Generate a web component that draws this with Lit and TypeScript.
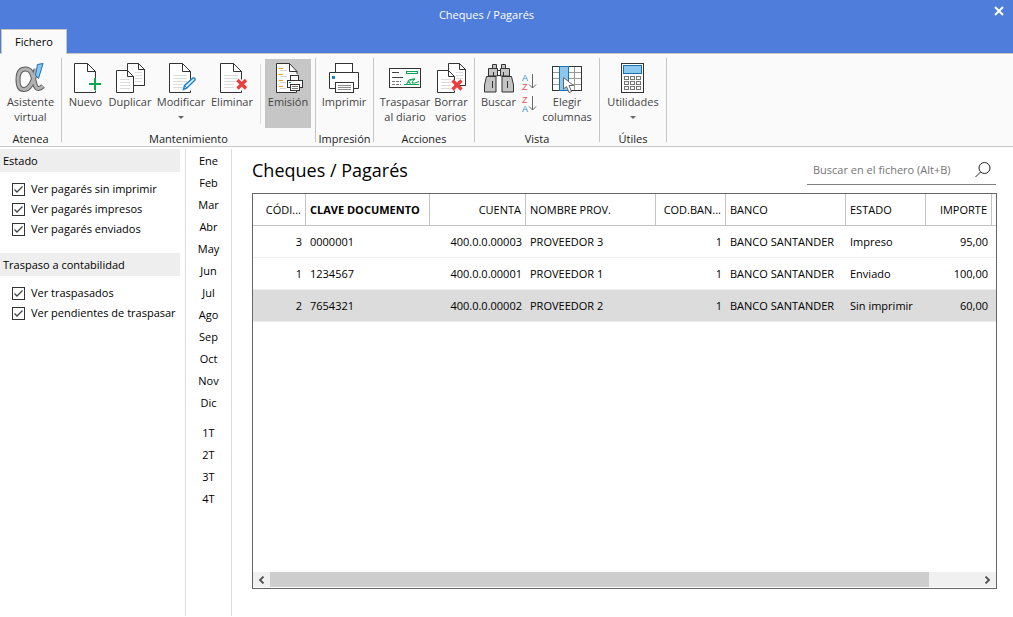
import { LitElement, html, svg, css, nothing } from "lit";
import type { TemplateResult } from "lit";
import { customElement, property, state } from "lit/decorators.js";
import { classMap } from "lit/directives/class-map.js";

/* ---------- icon pieces ---------- */

const sheet = (x: number, y: number, w: number, h: number, fold: number, cut = 0) => svg`
  <path d="M${x} ${y}H${x + w - fold}L${x + w} ${y + fold}V${y + h}H${x}Z" fill="#fff"/>
  <path d="M${x + w} ${y + h - cut}V${y + fold}L${x + w - fold} ${y}H${x}V${y + h}H${x + w}${cut ? "v-2" : "V" + (y + fold)}" fill="none" stroke="#333"/>
  <path d="M${x + w - fold} ${y}V${y + fold}H${x + w}" fill="none" stroke="#333"/>`;

const rules = (x: number, w: number, ys: number[]) =>
  svg`<path d="${ys.map((y) => `M${x} ${y}h${w}`).join("")}" stroke="#dcdcdc"/>`;

const cross = svg`<path d="M21.5 18l8.5 8.5M30 18l-8.5 8.5" stroke="#ee3b3b" stroke-width="3.2"/>`;

const icons: Record<string, TemplateResult> = {
  alpha: svg`
    <path d="M21 7C19 19 14.500 27.500 8.500 27.500C4 27.500 3 22 3 17.500C3 11 5.500 7 10.500 7C16.500 7 17.500 13 19.500 20.500C20.500 26 23 29 28 24" fill="none" stroke="#5c5c5c" stroke-width="5"/>
    <path d="M21 7C19 19 14.500 27.500 8.500 27.500C4 27.500 3 22 3 17.500C3 11 5.500 7 10.500 7C16.500 7 17.500 13 19.500 20.500C20.500 26 23 29 28 24" fill="none" stroke="#b2b2b2" stroke-width="3"/>
    <path d="M22.500 2.500L28 1.500L23.500 16.500L20.500 13Z" fill="#8cc7f0" stroke="#1a6fb5"/>`,
  nuevo: svg`${sheet(4.5, 1.5, 21, 29, 8, 13)}<path d="M25 16v12M19 22h12" stroke="#0ca750" stroke-width="2"/>`,
  duplicar: svg`${sheet(13.5, 1.5, 17, 22, 6)}${rules(21, 7, [10.5, 13.5, 16.5, 19.5])}
    ${sheet(2.5, 8.5, 17, 22, 6)}${rules(6, 10, [17.5, 20.5, 23.5, 26.5])}`,
  modificar: svg`${sheet(4.5, 1.5, 21, 29, 8, 13)}${rules(8, 14, [13.5, 16.5, 19.5])}${rules(8, 10, [22.5, 25.5])}
    <path d="M18.500 27.500L19.500 23.500L28 16Q30.500 15.500 30 18L22 26Z" fill="#d9edf9" stroke="#1d83c9" stroke-width="1.400"/>
    <path d="M19.500 23.500L22 26" stroke="#1d83c9"/>`,
  eliminar: svg`${sheet(4.5, 1.5, 21, 29, 8, 13)}${rules(8, 14, [13.5, 16.5, 19.5])}${rules(8, 10, [22.5, 25.5])}${cross}`,
  emision: svg`
    <path d="M4.500 1.500H18L25 9.500V30.500H4.500Z" fill="#fff"/>
    <path d="M25 12V9.500L17.500 1.500H4.500V30.500H24.500V28M17.500 1.500V9.500H25" fill="none" stroke="#333"/>
    <path d="M7 6.500h4M7 12.500h4M7 18.500h4M7 24.500h4" stroke="#f39c12"/>
    <path d="M8 8.500h7M8 14.500h7M8 20.500h6M8 26.500h6" stroke="#d4d4d4"/>
    <rect x="18.500" y="13.500" width="8" height="5" fill="#fff" stroke="#333"/>
    <rect x="15.500" y="18.500" width="15" height="7" fill="#fff" stroke="#333"/>
    <rect x="18.500" y="22.500" width="9" height="6" fill="#fff" stroke="#333"/>
    <path d="M20 24.500h6M20 26.500h6" stroke="#777"/>
    <path d="M17 20.500h2" stroke="#1d83c9"/>`,
  imprimir: svg`
    <rect x="7.500" y="1.500" width="17" height="10" fill="#fff" stroke="#333"/>
    <path d="M1.500 10.500H30.500V26.500H1.500Z" fill="#fff" stroke="#333"/>
    <rect x="4" y="14" width="3" height="3" fill="#1d83c9"/>
    <rect x="7.500" y="20.500" width="18" height="10" fill="#fff" stroke="#333"/>
    <path d="M10 23.500h13M10 25.500h13M10 27.500h13" stroke="#888"/>`,
  traspasar: svg`
    <rect x=".5" y="6.500" width="31" height="19" fill="#fff" stroke="#333"/>
    <path d="M3 10.500h7M3 15.500h11" stroke="#444"/>
    <path d="M3 19.500h9M3 22.500h9" stroke="#777" stroke-dasharray="3 1"/>
    <rect x="17.500" y="9.500" width="11" height="2" fill="#fff" stroke="#0ca750"/>
    <path d="M15 22.500h15M26 17q-8 0-7 3q4 1 1 2.500q-3 0-2-1.500q4-4 8-4q-3 2-3 4h3l4-1.500" fill="none" stroke="#0ca750"/>`,
  borrar: svg`${sheet(13.5, 1.5, 17, 22, 6)}${rules(21, 7, [10.5, 13.5, 16.5])}
    ${sheet(2.5, 8.5, 17, 22, 6, 12)}${rules(6, 10, [17.5, 20.5, 23.5, 26.5])}
    <path d="M17.500 18.500l9 9M26.500 18.500l-9 9" stroke="#ee3b3b" stroke-width="3.200"/>`,
  buscar: svg`
    <g fill="#c4c4c4" stroke="#333">
      <path d="M9.500 2.500h4v4h-4zM18.500 2.500h4v4h-4z"/>
      <rect x="14.500" y="8.500" width="3" height="5" fill="#fff"/>
      <path d="M5.500 6.500h9v7.500h-9zM17.500 6.500h9v7.500h-9z"/>
      <path d="M3.500 14.500h9.500v15.500h-11.500v-7zM19 14.500h9.500l2 8.500v7h-11.500z"/>
      <path d="M10.500 10v4M20.500 10v4M9.500 19v7M24.500 19v7" fill="none"/>
    </g>`,
  columnas: svg`
    <rect x="1.500" y="4.500" width="29" height="24" fill="#fff" stroke="#333"/>
    <path d="M2 10.500h28M2 16.500h28M2 22.500h28M17.500 5v23M23.500 5v23" stroke="#999"/>
    <rect x="8.500" y="4.500" width="9" height="24" fill="#8cc7f0" stroke="#1a6fb5"/>
    <path d="M12.500 15.500V27L15.500 24.500L18 30.500L20.500 29.500L18 23.500H22.500Z" fill="#fff" stroke="#666"/>`,
  calculadora: svg`
    <rect x="4.500" y="1.500" width="22" height="29" fill="#fff" stroke="#333"/>
    <rect x="6.500" y="3.500" width="18" height="8" fill="#8cc7f0" stroke="#1a6fb5"/>
    <g fill="#fff" stroke="#777">
      ${[14.5, 19.5, 24.5].map((y) => [7.5, 13.5, 19.5].map((x) => svg`<rect x=${x} y=${y} width="4" height="3"/>`))}
    </g>`,
};

const glyph = (name: string) => html`<svg class="icon" width="32" height="32" viewBox="0 0 32 32" aria-hidden="true">${icons[name]}</svg>`;

const sortGlyph = (top: string, bottom: string) => html`
  <svg width="16" height="20" viewBox="0 0 16 20" aria-hidden="true">
    <text x="1" y="9" class=${top === "A" ? "za a" : "za z"}>${top}</text>
    <text x="1" y="18" class=${bottom === "A" ? "za a" : "za z"}>${bottom}</text>
    <path d="M11.500 2V16M8 12.500L11.500 16L15 12.500" fill="none" stroke="#666"/>
  </svg>`;

/* ---------- ribbon ---------- */

@customElement("ribbon-button")
class RibbonButton extends LitElement {
  @property() label = "";
  @property() icon = "";
  @property({ type: Boolean }) menu = false;
  @property({ type: Boolean }) pressed = false;

  static styles = css`
    :host { display: block; flex: none; }
    .btn {
      display: flex; flex-direction: column; align-items: center; justify-content: flex-start;
      width: 100%; height: 69px; padding: 3px 0 0; margin: 0; border: 0;
      background: none; color: #444;
      font: 11px/15px "Open Sans", "Noto Sans", sans-serif;
    }
    .pressed { background: #c6c6c6; }
    .icon { display: block; flex: none; }
    .label { white-space: pre; text-align: center; }
    .arrow {
      margin-top: 7px;
      border: 3px solid transparent; border-top-color: #666; border-bottom: 0;
    }
  `;

  render() {
    return html`<button class=${classMap({ btn: true, pressed: this.pressed })} aria-pressed=${this.pressed}>
      ${glyph(this.icon)}
      <span class="label">${this.label}</span>
      ${this.menu ? html`<span class="arrow"></span>` : nothing}
    </button>`;
  }
}

@customElement("app-ribbon")
class AppRibbon extends LitElement {
  static styles = css`
    :host {
      display: flex; padding: 4px 0;
      border-bottom: 1px solid #c6c6c6; background: #fafafa;
      font: 11px/15px "Open Sans", "Noto Sans", sans-serif; color: #222;
    }
    .group {
      display: flex; flex-direction: column; justify-content: space-between;
      height: 84px; padding-top: 1px; box-sizing: border-box;
      border-right: 1px solid #c6c6c6;
    }
    .tools { display: flex; padding: 0 4px; }
    .tools.tight { padding-left: 3px; }
    .name { text-align: center; height: 11px; line-height: 15px; white-space: nowrap; }
    .rule { width: 1px; height: 60px; margin: 5px 4px 0; background: #ddd; }
    .sorts { display: flex; flex-direction: column; gap: 2px; padding: 13px 2px 0; }
    .sort { display: block; padding: 0; border: 0; background: none; height: 20px; }
    .sort svg { display: block; overflow: visible; }
    .za { font: 9px "Liberation Sans", sans-serif; }
    .a { fill: #2a8fd0; }
    .z { fill: #e05555; }
    .w38 { width: 38px; } .w41 { width: 41px; } .w46 { width: 46px; } .w48 { width: 48px; }
    .w50 { width: 50px; } .w53 { width: 53px; } .w54 { width: 54px; } .w56 { width: 56px; } .w58 { width: 58px; }
  `;

  render() {
    return html`
      <div class="group">
        <div class="tools"><ribbon-button class="w53" icon="alpha" label=${"Asistente\nvirtual"}></ribbon-button></div>
        <div class="name">Atenea</div>
      </div>
      <div class="group">
        <div class="tools tight">
          <ribbon-button class="w41" icon="nuevo" label="Nuevo"></ribbon-button>
          <ribbon-button class="w48" icon="duplicar" label="Duplicar"></ribbon-button>
          <ribbon-button class="w54" icon="modificar" label="Modificar" menu></ribbon-button>
          <ribbon-button class="w48" icon="eliminar" label="Eliminar"></ribbon-button>
          <span class="rule"></span>
          <ribbon-button class="w46" icon="emision" label="Emisión" pressed></ribbon-button>
        </div>
        <div class="name">Mantenimiento</div>
      </div>
      <div class="group">
        <div class="tools tight"><ribbon-button class="w50" icon="imprimir" label="Imprimir"></ribbon-button></div>
        <div class="name">Impresión</div>
      </div>
      <div class="group">
        <div class="tools">
          <ribbon-button class="w54" icon="traspasar" label=${"Traspasar\nal diario"}></ribbon-button>
          <ribbon-button class="w38" icon="borrar" label=${"Borrar\nvarios"}></ribbon-button>
        </div>
        <div class="name">Acciones</div>
      </div>
      <div class="group">
        <div class="tools tight">
          <ribbon-button class="w41" icon="buscar" label="Buscar"></ribbon-button>
          <div class="sorts">
            <button class="sort" aria-label="Orden ascendente">${sortGlyph("A", "Z")}</button>
            <button class="sort" aria-label="Orden descendente">${sortGlyph("Z", "A")}</button>
          </div>
          <ribbon-button class="w56" icon="columnas" label=${"Elegir\ncolumnas"}></ribbon-button>
        </div>
        <div class="name">Vista</div>
      </div>
      <div class="group">
        <div class="tools"><ribbon-button class="w58" icon="calculadora" label="Utilidades" menu></ribbon-button></div>
        <div class="name">Útiles</div>
      </div>`;
  }
}

/* ---------- filters ---------- */

@customElement("filter-panel")
class FilterPanel extends LitElement {
  static styles = css`
    :host { display: block; padding-right: 5px; font: 11px/20px "Open Sans", "Noto Sans", sans-serif; color: #000; }
    .section { margin: 0; padding: 0; border: 0; }
    .section + .section { margin-top: 14px; }
    .title { display: block; width: 100%; box-sizing: border-box; height: 23px; line-height: 23px; padding: 0 3px; background: #eee; margin-bottom: 7px; }
    .row { display: flex; align-items: center; gap: 6px; height: 20px; padding-left: 12px; white-space: nowrap; }
    .box {
      appearance: none; flex: none; width: 13px; height: 13px; margin: 0;
      border: 1px solid #333; background: #fff;
    }
    .tick { display: grid; flex: none; }
    .tick > * { grid-area: 1 / 1; }
    .tick svg { pointer-events: none; visibility: hidden; }
    .box:checked + svg { visibility: visible; }
  `;

  private groups = [
    { title: "Estado", items: ["Ver pagarés sin imprimir", "Ver pagarés impresos", "Ver pagarés enviados"] },
    { title: "Traspaso a contabilidad", items: ["Ver traspasados", "Ver pendientes de traspasar"] },
  ];

  render() {
    return this.groups.map((g) => html`
      <fieldset class="section">
        <legend class="title">${g.title}</legend>
        ${g.items.map((text) => html`
          <label class="row">
            <span class="tick">
              <input class="box" type="checkbox" checked />
              <svg width="13" height="13" viewBox="0 0 13 13" aria-hidden="true"><path d="M2.500 6.500L5 9L10.500 3.500" fill="none" stroke="#444" stroke-width="1.300"/></svg>
            </span>
            <span>${text}</span>
          </label>`)}
      </fieldset>`);
  }
}

@customElement("period-list")
class PeriodList extends LitElement {
  static styles = css`
    :host { display: block; border: solid #dcdcdc; border-width: 0 1px; padding-top: 1px; }
    .period {
      display: block; width: 100%; height: 22px; padding: 0; border: 0; background: none;
      font: 11px/22px "Open Sans", "Noto Sans", sans-serif; color: #000; text-align: center;
    }
    .quarters { margin-top: 8px; }
  `;

  render() {
    const months = ["Ene", "Feb", "Mar", "Abr", "May", "Jun", "Jul", "Ago", "Sep", "Oct", "Nov", "Dic"];
    const quarters = ["1T", "2T", "3T", "4T"];
    return html`
      <div>${months.map((m) => html`<button class="period">${m}</button>`)}</div>
      <div class="quarters">${quarters.map((q) => html`<button class="period">${q}</button>`)}</div>`;
  }
}

/* ---------- grid ---------- */

interface Column { title: string; width: number; right?: boolean; strong?: boolean; }

const columns: Column[] = [
  { title: "CÓDI...", width: 53, right: true },
  { title: "CLAVE DOCUMENTO", width: 124, strong: true },
  { title: "CUENTA", width: 96, right: true },
  { title: "NOMBRE PROV.", width: 130 },
  { title: "COD.BAN...", width: 70, right: true },
  { title: "BANCO", width: 120 },
  { title: "ESTADO", width: 80 },
  { title: "IMPORTE", width: 66, right: true },
];

const records = [
  ["3", "0000001", "400.0.0.00003", "PROVEEDOR 3", "1", "BANCO SANTANDER", "Impreso", "95,00"],
  ["1", "1234567", "400.0.0.00001", "PROVEEDOR 1", "1", "BANCO SANTANDER", "Enviado", "100,00"],
  ["2", "7654321", "400.0.0.00002", "PROVEEDOR 2", "1", "BANCO SANTANDER", "Sin imprimir", "60,00"],
];

@customElement("cheque-grid")
class ChequeGrid extends LitElement {
  @state() private selected = 2;

  static styles = css`
    :host { display: flex; flex-direction: column; border: 1px solid #666; background: #fff; overflow: hidden; }
    .view { flex: 1; overflow: hidden; }
    .table {
      width: 100%; table-layout: fixed; border-collapse: separate; border-spacing: 0;
      font: 11px/16px "Open Sans", "Noto Sans", sans-serif; color: #000;
    }
    .head, .cell {
      height: 32px; box-sizing: border-box; padding: 0 4px; text-align: left; font-weight: 400;
      white-space: nowrap; overflow: hidden; border-bottom: 1px solid #eee;
    }
    .head { border-bottom-color: #c4c4c4; border-right: 1px solid #c4c4c4; text-overflow: ellipsis; }
    .head:last-child { border-right: 0; padding: 0; }
    .cell:last-child { padding: 0; }
    .right { text-align: right; }
    .strong { font-weight: 700; }
    .chosen .cell { background: #dcdcdc; }
    .scroll { display: flex; height: 15px; margin-bottom: 1px; background: #f0f0f0; }
    .step { width: 17px; padding: 0; border: 0; background: none; display: flex; align-items: center; justify-content: center; }
    .track { flex: 1; }
    .thumb { height: 100%; background: #cdcdcd; }
  `;

  render() {
    return html`
      <div class="view">
        <table class="table">
          <colgroup>${columns.map((c) => html`<col style="width:${c.width}px" />`)}<col /></colgroup>
          <thead><tr>
            ${columns.map((c) => html`<th class=${classMap({ head: true, right: !!c.right, strong: !!c.strong })}>${c.title}</th>`)}
            <th class="head"></th>
          </tr></thead>
          <tbody>
            ${records.map((r, i) => html`
              <tr class=${classMap({ chosen: i === this.selected })} @click=${() => (this.selected = i)}>
                ${r.map((v, k) => html`<td class=${classMap({ cell: true, right: !!columns[k].right })}>${v}</td>`)}
                <td class="cell"></td>
              </tr>`)}
          </tbody>
        </table>
      </div>
      <div class="scroll">
        <button class="step" aria-label="Desplazar a la izquierda">
          <svg width="7" height="8" viewBox="0 0 7 8"><path d="M5.500 .5L2 4L5.500 7.500" fill="none" stroke="#505050" stroke-width="1.800"/></svg>
        </button>
        <div class="track"><div class="thumb" style="width:93%"></div></div>
        <button class="step" aria-label="Desplazar a la derecha">
          <svg width="7" height="8" viewBox="0 0 7 8"><path d="M1.500 .5L5 4L1.500 7.500" fill="none" stroke="#505050" stroke-width="1.800"/></svg>
        </button>
      </div>`;
  }
}

/* ---------- window ---------- */

@customElement("app-root")
class AppRoot extends LitElement {
  static styles = css`
    :host {
      display: flex; flex-direction: column; min-height: 100vh; background: #fff;
      font-family: "Open Sans", "Noto Sans", sans-serif; font-size: 11px; color: #000;
    }
    .titlebar {
      display: grid; grid-template-columns: 1fr 40px; align-items: center; height: 29px;
      background: #4e7ddb; color: #fff; text-align: center;
    }
    .caption { font-size: 11px; font-weight: 400; margin: 0; }
    .close {
      display: flex; align-items: center; justify-content: center; justify-self: end; align-self: start;
      width: 29px; height: 22px; padding: 0; border: 0; background: none;
    }
    .tabs { display: flex; height: 24px; background: #4e7ddb; padding-left: 1px; border-bottom: 1px solid #c6c6c6; }
    .tab {
      height: 25px; width: 66px; padding: 0 0 2px; border: 1px solid #c6c6c6; border-bottom: 0; background: #fafafa;
      font: inherit; color: #000; text-align: center;
    }
    .body { flex: 1; display: grid; grid-template-columns: 185px 47px 1fr; padding: 2px 0 1px; }
    .main { display: flex; flex-direction: column; padding: 0 16px 27px 20px; min-width: 0; }
    .top { display: flex; justify-content: space-between; align-items: flex-start; height: 44px; }
    .heading { margin: 7px 0 0; font-size: 18px; line-height: 28px; font-weight: 400; }
    .search { display: flex; align-items: center; width: 189px; height: 36px; box-sizing: border-box; padding: 6px 5px 0 6px; margin-right: 1px; border-bottom: 1px solid #808080; }
    .field { flex: 1; min-width: 0; padding: 0; border: 0; outline: 0; background: none; font: inherit; color: #000; }
    .field::placeholder { color: #767676; opacity: 1; }
    .go { padding: 0; border: 0; background: none; display: block; }
    .go svg { display: block; }
    cheque-grid { flex: 1; }
  `;

  render() {
    return html`
      <header class="titlebar">
        <h1 class="caption">Cheques / Pagarés</h1>
        <button class="close" aria-label="Cerrar">
          <svg width="10" height="10" viewBox="0 0 10 10"><path d="M1 1L9 9M9 1L1 9" stroke="#fff" stroke-width="2"/></svg>
        </button>
      </header>
      <nav class="tabs"><button class="tab">Fichero</button></nav>
      <app-ribbon></app-ribbon>
      <div class="body">
        <filter-panel></filter-panel>
        <period-list></period-list>
        <main class="main">
          <div class="top">
            <h2 class="heading">Cheques / Pagarés</h2>
            <div class="search">
              <input class="field" type="text" aria-label="Buscar en el fichero" placeholder="Buscar en el fichero (Alt+B)" />
              <button class="go" aria-label="Buscar">
                <svg width="16" height="16" viewBox="0 0 16 16"><circle cx="9.500" cy="6" r="5.500" fill="none" stroke="#222"/><path d="M5.500 10L.5 15" stroke="#222"/></svg>
              </button>
            </div>
          </div>
          <cheque-grid></cheque-grid>
        </main>
      </div>`;
  }
}
